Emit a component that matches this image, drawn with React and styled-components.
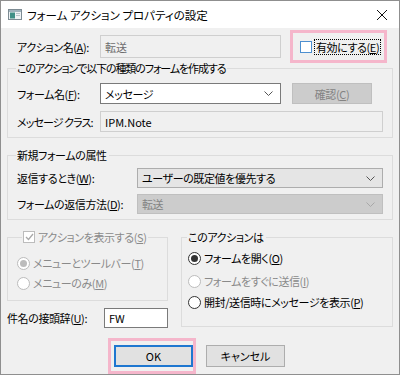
import React from "react";
import styled, { createGlobalStyle } from "styled-components";

const Global = createGlobalStyle`
  html, body {
    margin: 0;
    padding: 0;
    background: #ffffff;
  }
  body {
    font-family: "Noto Sans CJK JP", "Noto Sans", sans-serif;
    font-size: 11px;
    font-feature-settings: "palt";
    letter-spacing: -0.4px;
    color: #000;
    white-space: nowrap;
  }
  * {
    box-sizing: border-box;
  }
`;

const Window = styled.div`
  width: 400px;
  height: 375px;
  border: 1px solid #8f8f8f;
  display: flex;
  flex-direction: column;
  overflow: hidden;
`;

const TitleBar = styled.div`
  height: 27px;
  background: #fff;
  display: flex;
  align-items: center;
  padding: 0 8px 0 7px;
  flex-shrink: 0;
`;

const TitleText = styled.span`
  margin-left: 5px;
  flex: 1;
  line-height: 16px;
  font-size: 11.5px;
  letter-spacing: 0;
`;

const CloseBtn = styled.div`
  width: 12px;
  height: 12px;
  display: flex;
  margin-right: 3px;
`;

const Body = styled.div`
  flex: 1;
  background: #f0f0f0;
  padding: 0 6px;
  display: flex;
  flex-direction: column;
`;

const Row = styled.div`
  display: flex;
  align-items: center;
  margin-top: ${(p) => p.mt || 0}px;
  padding-left: ${(p) => p.pl || 0}px;
`;

const Label = styled.div`
  width: ${(p) => p.w}px;
  flex-shrink: 0;
  line-height: 16px;
  letter-spacing: ${(p) => (p.tight ? "-0.9px" : "inherit")};
  color: ${(p) => (p.disabled ? "#8a8a8a" : "#000")};
`;

const Key = styled.u`
  text-decoration: underline;
  text-underline-offset: 1px;
`;

const TextBox = styled.div`
  width: ${(p) => p.w}px;
  height: ${(p) => p.h || 21}px;
  border: 1px solid ${(p) => (p.readonly ? "#cfcfcf" : "#7a7a7a")};
  background: ${(p) => (p.readonly ? "#f0f0f0" : "#fff")};
  color: ${(p) => (p.dim ? "#6d6d6d" : "#000")};
  padding-left: 4px;
  display: flex;
  align-items: center;
  line-height: 16px;
  letter-spacing: 0;
`;

const Combo = styled.div`
  width: ${(p) => p.w}px;
  height: ${(p) => p.h || 21}px;
  border: 1px solid
    ${(p) =>
      p.kind === "edit" ? "#7a7a7a" : p.kind === "off" ? "#bfbfbf" : "#adadad"};
  background: ${(p) =>
    p.kind === "edit" ? "#fff" : p.kind === "off" ? "#cccccc" : "#e5e5e5"};
  color: ${(p) => (p.kind === "off" ? "#838383" : "#000")};
  display: flex;
  align-items: center;
  justify-content: space-between;
  padding: 0 7px 0 4px;
  line-height: 16px;
`;

const Chevron = ({ color }) => (
  <svg width="9" height="5" viewBox="0 0 9 5">
    <polyline
      points="0.5,0.5 4.5,4.5 8.5,0.5"
      fill="none"
      stroke={color}
      strokeWidth="1"
    />
  </svg>
);

const Button = styled.div`
  width: ${(p) => p.w || 79}px;
  height: ${(p) => p.h || 22}px;
  margin-left: ${(p) => p.ml || 0}px;
  display: flex;
  align-items: center;
  justify-content: center;
  line-height: 16px;
  background: ${(p) => (p.disabled ? "#cccccc" : "#e1e1e1")};
  color: ${(p) => (p.disabled ? "#838383" : "#000")};
  border: ${(p) =>
    p.primary
      ? "2px solid #1f77d0"
      : p.disabled
      ? "1px solid #bfbfbf"
      : "1px solid #adadad"};
`;

const Highlight = styled.div`
  border: 3px solid #f5b6cb;
  display: flex;
  align-items: center;
  flex-shrink: 0;
  padding: ${(p) => p.pad};
  margin-left: ${(p) => p.ml || 0}px;
  width: ${(p) => (p.w ? p.w + "px" : "auto")};
  height: ${(p) => (p.h ? p.h + "px" : "auto")};
`;

const Box = styled.div`
  width: ${(p) => p.size}px;
  height: ${(p) => p.size}px;
  flex-shrink: 0;
  border: 1px solid ${(p) => p.color};
  background: #fff;
  display: flex;
  align-items: center;
  justify-content: center;
`;

const FocusText = styled.span`
  border: 1px dotted #000;
  margin-left: 2px;
  padding: 0 1px;
  line-height: 14px;
`;

const Group = styled.fieldset`
  margin: ${(p) => p.mt || 0}px 0 0 0;
  border: 1px solid #dcdcdc;
  padding: 0 ${(p) => p.pr || 9}px ${(p) => p.pb || 5}px
    ${(p) => p.pleft || 9}px;
  min-width: 0;
  width: ${(p) => (p.w ? p.w + "px" : "auto")};
  flex: ${(p) => (p.grow ? 1 : "none")};
`;

const Legend = styled.legend`
  padding: 0 2px 0 1px;
  margin-left: ${(p) => p.ml || -1}px;
  line-height: 16px;
  display: flex;
  align-items: center;
  letter-spacing: ${(p) => (p.tight ? "-1.1px" : "inherit")};
  color: ${(p) => (p.disabled ? "#8a8a8a" : "#000")};
`;

const Option = styled.div`
  display: flex;
  align-items: center;
  line-height: 16px;
  margin-top: ${(p) => p.mt || 0}px;
  color: ${(p) => (p.disabled ? "#8a8a8a" : "#000")};
`;

const RadioRing = styled.span`
  width: 13px;
  height: 13px;
  border-radius: 50%;
  border: 1px solid ${(p) => (p.disabled ? "#bcbcbc" : "#333")};
  background: #fff;
  display: flex;
  align-items: center;
  justify-content: center;
  margin-right: 3px;
  flex-shrink: 0;
`;

const RadioDot = styled.span`
  width: 7px;
  height: 7px;
  border-radius: 50%;
  background: ${(p) => (p.disabled ? "#bcbcbc" : "#333")};
`;

const Radio = ({ checked, disabled, children, mt }) => (
  <Option disabled={disabled} mt={mt}>
    <RadioRing disabled={disabled}>
      {checked && <RadioDot disabled={disabled} />}
    </RadioRing>
    <span>{children}</span>
  </Option>
);

const Split = styled.div`
  display: flex;
  align-items: flex-start;
  margin-top: 9px;
`;

const Column = styled.div`
  display: flex;
  flex-direction: column;
  width: ${(p) => (p.w ? p.w + "px" : "auto")};
  flex: ${(p) => (p.grow ? 1 : "none")};
  margin-left: ${(p) => p.ml || 0}px;
`;

const Footer = styled.div`
  display: flex;
  align-items: center;
  margin-top: 10px;
  padding-left: 101px;
  letter-spacing: 0;
`;

function AppIcon() {
  return (
    <svg width="14" height="11" viewBox="0 0 14 11">
      <rect x="0.5" y="0.5" width="13" height="10" fill="#eef2f4" stroke="#7d8b93" />
      <rect x="1" y="1" width="12" height="2" fill="#9fb2bc" />
      <rect x="2" y="3.5" width="5" height="6" fill="#3f8f86" />
      <rect x="8" y="4" width="4" height="1" fill="#b7c3c9" />
      <rect x="8" y="6" width="4" height="1" fill="#b7c3c9" />
    </svg>
  );
}

export default function App() {
  return (
    <>
      <Global />
      <Window>
        <TitleBar>
          <AppIcon />
          <TitleText>フォーム アクション プロパティの設定</TitleText>
          <CloseBtn>
            <svg width="12" height="12" viewBox="0 0 12 12">
              <path d="M1 1 L11 11 M11 1 L1 11" stroke="#111" strokeWidth="1" />
            </svg>
          </CloseBtn>
        </TitleBar>
        <Body>
          <Row mt={2} pl={10}>
            <Label w={83}>
              アクション名(<Key>A</Key>):
            </Label>
            <TextBox w={181} h={23} readonly dim>
              転送
            </TextBox>
            <Highlight ml={9} w={97} h={33} pad="0 0 0 7px">
              <Box size={12} color="#4d8fd0" />
              <FocusText>
                有効にする(<Key>E</Key>)
              </FocusText>
            </Highlight>
          </Row>

          <Group mt={-3}>
            <Legend tight>このアクションで以下の種類のフォームを作成する</Legend>
            <Row mt={7}>
              <Label w={83}>
                フォーム名(<Key>F</Key>):
              </Label>
              <Combo w={181} kind="edit">
                <span>メッセージ</span>
                <Chevron color="#555" />
              </Combo>
              <Button w={80} h={21} ml={11} disabled>
                確認(<Key>C</Key>)
              </Button>
            </Row>
            <Row mt={7}>
              <Label w={83} tight>
                メッセージ クラス:
              </Label>
              <TextBox w={283} readonly>
                IPM.Note
              </TextBox>
            </Row>
          </Group>

          <Group mt={9}>
            <Legend>新規フォームの属性</Legend>
            <Row mt={5}>
              <Label w={120}>
                返信するとき(<Key>W</Key>):
              </Label>
              <Combo w={246} h={20}>
                <span>ユーザーの既定値を優先する</span>
                <Chevron color="#555" />
              </Combo>
            </Row>
            <Row mt={6}>
              <Label w={120}>
                フォームの返信方法(<Key>D</Key>):
              </Label>
              <Combo w={246} h={20} kind="off">
                <span>転送</span>
                <Chevron color="#a8a8a8" />
              </Combo>
            </Row>
          </Group>

          <Split>
            <Column w={161}>
              <Group pb={9}>
                <Legend disabled ml={5}>
                  <Box size={12} color="#bcbcbc">
                    <svg width="9" height="8" viewBox="0 0 9 8">
                      <polyline
                        points="1,4 3.5,6.5 8,1"
                        fill="none"
                        stroke="#a8a8a8"
                        strokeWidth="1.3"
                      />
                    </svg>
                  </Box>
                  <span style={{ marginLeft: 3 }}>
                    アクションを表示する(<Key>S</Key>)
                  </span>
                </Legend>
                <Radio checked disabled mt={10}>
                  メニューとツールバー(<Key>T</Key>)
                </Radio>
                <Radio disabled mt={4}>
                  メニューのみ(<Key>M</Key>)
                </Radio>
              </Group>
              <Row mt={7}>
                <Label w={97}>
                  件名の接頭辞(<Key>U</Key>):
                </Label>
                <TextBox w={64} h={20}>
                  FW
                </TextBox>
              </Row>
            </Column>
            <Column grow ml={13}>
              <Group pleft={6} pb={16}>
                <Legend>このアクションは</Legend>
                <Radio checked mt={5}>
                  フォームを開く(<Key>O</Key>)
                </Radio>
                <Radio disabled mt={7}>
                  フォームをすぐに送信(<Key>I</Key>)
                </Radio>
                <Radio mt={5}>
                  開封/送信時にメッセージを表示(<Key>P</Key>)
                </Radio>
              </Group>
            </Column>
          </Split>

          <Footer>
            <Highlight pad="4px 0 4px 3px">
              <Button primary>OK</Button>
            </Highlight>
            <Button ml={10}>キャンセル</Button>
          </Footer>
        </Body>
      </Window>
    </>
  );
}
